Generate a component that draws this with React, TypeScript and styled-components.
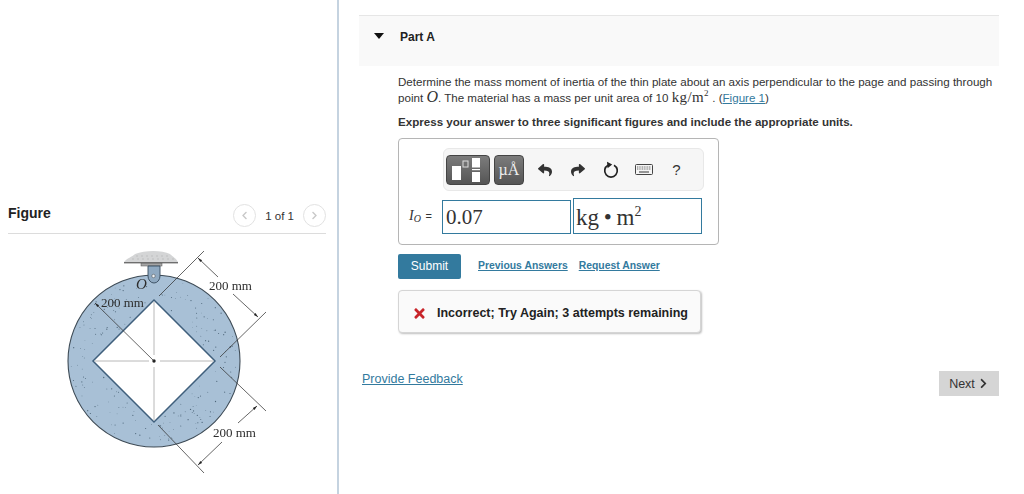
import React from 'react';
import styled, { createGlobalStyle } from 'styled-components';
import { FaReply, FaShare, FaTimes, FaChevronRight, FaChevronLeft } from 'react-icons/fa';

const GlobalStyle = createGlobalStyle`
  html, body {
    margin: 0;
    padding: 0;
    background: #fff;
    color: #1f1f1f;
    font-family: "Liberation Sans", Arial, sans-serif;
  }
`;

// little dots on the plate, same every render
function makeSpeckles() {
  const dots: { x: number; y: number; r: number }[] = [];
  let seed = 17;
  const next = () => {
    seed = (seed * 16807) % 2147483647;
    return seed / 2147483647;
  };
  while (dots.length < 200) {
    const x = 68 + next() * 172;
    const y = 275 + next() * 172;
    const dx = x - 154;
    const dy = y - 361;
    const inCircle = dx * dx + dy * dy < 83 * 83;
    const inDiamond = Math.abs(dx) + Math.abs(dy) < 65;
    if (inCircle && !inDiamond) dots.push({ x, y, r: 0.3 + next() * 0.35 });
  }
  return dots;
}

const speckles = makeSpeckles();

function PlateFigure() {
  return (
    <FigureSvg viewBox="60 240 220 240" width="220" height="240">
      <defs>
        <marker id="tip" markerWidth="7" markerHeight="7" refX="6" refY="2.5" orient="auto-start-reverse">
          <path d="M0 0.8 L6 2.5 L0 4.2 Z" fill="#222" />
        </marker>
      </defs>

      {/* support */}
      <path d="M124 262 C127 258 132 257 135 254 C145 250 162 250 170 254 C173 257 176 258 178 262 Z" fill="#d4d5d6" />
      <path d="M136 256 H168 M132 259 H174" stroke="#b9babb" strokeWidth="0.8" strokeDasharray="2 3" />
      <rect x="124" y="262" width="54" height="1.4" fill="#6e6e6e" />
      <rect x="141" y="263.4" width="21" height="2.6" fill="#a5a5a5" stroke="#555" strokeWidth="0.5" />

      <circle cx="154" cy="361" r="86" fill="#a8c0d6" stroke="#3d4a55" strokeWidth="1.1" />
      {speckles.map((d, i) => (
        <circle key={i} cx={d.x} cy={d.y} r={d.r} fill="#4d6579" />
      ))}
      <path d="M148 266 H160 V276 A6 7 0 0 1 148 276 Z" fill="#8fa9c1" stroke="#364a5b" strokeWidth="0.9" />
      <circle cx="153.5" cy="276" r="1.7" fill="#eef2f5" stroke="#444" strokeWidth="0.5" />

      <path d="M154 300 L215 361 L154 422 L93 361 Z" fill="#fff" stroke="#3f5f7c" strokeWidth="1.5" />

      {/* center lines */}
      <g stroke="#b8b8b8" strokeWidth="1" fill="none">
        <path d="M95 361 H149 M160 361 H213" />
        <path d="M154 302 V355 M154 367 V420" />
      </g>
      <circle cx="154" cy="361" r="1.7" fill="#222" />

      {/* dimension lines */}
      <g stroke="#333" strokeWidth="0.75" fill="none">
        <path d="M159 296 L204 251" />
        <path d="M220 357 L266 312" />
        <path d="M220 367 L266 411" />
        <path d="M158 425 L204 473" />
        <path d="M218 277 L198 258" markerEnd="url(#tip)" />
        <path d="M233 294 L258 317" markerEnd="url(#tip)" />
        <path d="M238 423 L257 406" markerEnd="url(#tip)" />
        <path d="M222 442 L198 465" markerEnd="url(#tip)" />
        <path d="M154 361 L95 303" markerEnd="url(#tip)" />
      </g>

      <FigureLabel x="209" y="290">200 mm</FigureLabel>
      <FigureLabel x="101" y="307">200 mm</FigureLabel>
      <FigureLabel x="213" y="437">200 mm</FigureLabel>
      <PointLabel x="136" y="289">O</PointLabel>
    </FigureSvg>
  );
}

function TemplateIcon() {
  return (
    <svg width="32" height="24" viewBox="0 0 32 24">
      <rect x="0" y="8" width="9" height="14" fill="#fff" />
      <rect x="11" y="3" width="5" height="6" fill="none" stroke="#ddd" strokeWidth="1" />
      <rect x="20" y="0" width="8" height="9.5" fill="#fff" />
      <rect x="20" y="11" width="8" height="1.2" fill="#fff" />
      <rect x="20" y="14" width="8" height="10" fill="#fff" />
    </svg>
  );
}

function RefreshIcon() {
  return (
    <svg width="16" height="18" viewBox="0 0 16 18">
      <path d="M5 4.2 A6.3 6.3 0 1 0 11 4.2" fill="none" stroke="#222" strokeWidth="1.7" />
      <path d="M4 0.8 L9.2 3.6 L4.6 7.2 Z" fill="#222" />
    </svg>
  );
}

function KeyboardIcon() {
  return (
    <svg width="18" height="11" viewBox="0 0 18 11">
      <rect x="0.5" y="0.5" width="17" height="10" rx="1" fill="#f5f5f5" stroke="#444" />
      <path d="M2 3 H16 M2 5 H16" stroke="#666" strokeWidth="1" strokeDasharray="1 0.7" />
      <path d="M4 8 H14" stroke="#555" strokeWidth="1.2" />
    </svg>
  );
}

export default function App() {
  return (
    <Page>
      <GlobalStyle />
      <LeftPanel>
        <FigureHeader>
          <FigureTitle>Figure</FigureTitle>
          <Pager>
            <PagerButton><FaChevronLeft size={9} /></PagerButton>
            <PagerText>1 of 1</PagerText>
            <PagerButton><FaChevronRight size={9} /></PagerButton>
          </Pager>
        </FigureHeader>
        <PlateFigure />
      </LeftPanel>

      <RightPanel>
        <PartHeader>
          <Caret />
          <PartTitle>Part A</PartTitle>
        </PartHeader>

        <PartBody>
          <Question>
            <div>Determine the mass moment of inertia of the thin plate about an axis perpendicular to the page and passing through</div>
            <div>point <MathItalic>O</MathItalic>. The material has a mass per unit area of 10 <MathText>kg/m<sup>2</sup></MathText>&nbsp;. (<TextLink>Figure 1</TextLink>)</div>
          </Question>
          <Instruction>Express your answer to three significant figures and include the appropriate units.</Instruction>

          <AnswerBox>
            <Toolbar>
              <TemplateButton><TemplateIcon /></TemplateButton>
              <UnitButton>µÅ</UnitButton>
              <ToolIcon><FaReply size={14} /></ToolIcon>
              <ToolIcon><FaShare size={14} /></ToolIcon>
              <ToolIcon><RefreshIcon /></ToolIcon>
              <ToolIcon><KeyboardIcon /></ToolIcon>
              <ToolIcon>?</ToolIcon>
            </Toolbar>
            <AnswerRow>
              <AnswerLabel><i>I</i><Sub>O</Sub> <Equals>=</Equals></AnswerLabel>
              <ValueField>0.07</ValueField>
              <UnitField>kg <Dot>•</Dot> m<sup>2</sup></UnitField>
            </AnswerRow>
          </AnswerBox>

          <ActionRow>
            <SubmitButton>Submit</SubmitButton>
            <ActionLink>Previous Answers</ActionLink>
            <ActionLink>Request Answer</ActionLink>
          </ActionRow>

          <Feedback>
            <FaTimes size={15} color="#c8252a" />
            <FeedbackText>Incorrect; Try Again; 3 attempts remaining</FeedbackText>
          </Feedback>
        </PartBody>

        <FooterRow>
          <FeedbackLink>Provide Feedback</FeedbackLink>
          <NextButton>Next <FaChevronRight size={11} /></NextButton>
        </FooterRow>
      </RightPanel>
    </Page>
  );
}

const Page = styled.div`
  display: flex;
  width: 1024px;
  height: 494px;
  overflow: hidden;
`;

const LeftPanel = styled.div`
  box-sizing: border-box;
  width: 339px;
  height: 494px;
  padding: 204px 11px 0 8px;
  border-right: 2px solid #c5d3e0;
`;

const FigureHeader = styled.div`
  display: flex;
  justify-content: space-between;
  height: 29px;
  border-bottom: 1px solid #dcdcdc;
`;

const FigureTitle = styled.div`
  font-size: 14px;
  font-weight: bold;
  line-height: 18px;
  color: #222;
`;

const Pager = styled.div`
  display: flex;
  align-items: flex-start;
  gap: 9px;
`;

const PagerButton = styled.div`
  box-sizing: border-box;
  width: 23px;
  height: 23px;
  border: 1px solid #e2e2e2;
  border-radius: 50%;
  display: flex;
  align-items: center;
  justify-content: center;
  color: #c8c8c8;
`;

const PagerText = styled.span`
  font-size: 11.5px;
  line-height: 25px;
  color: #333;
`;

const FigureSvg = styled.svg`
  display: block;
  margin: 6px 0 0 52px;
  filter: blur(0.45px);
`;

const FigureLabel = styled.text`
  font-family: "Liberation Serif", "Times New Roman", serif;
  font-size: 13px;
  fill: #2d2d2d;
`;

const PointLabel = styled(FigureLabel)`
  font-size: 15px;
  font-style: italic;
`;

const RightPanel = styled.div`
  box-sizing: border-box;
  width: 640px;
  margin-left: 20px;
  padding-top: 15px;
`;

const PartHeader = styled.div`
  box-sizing: border-box;
  height: 51px;
  padding: 14px 0 0 15px;
  display: flex;
  align-items: flex-start;
  background: #f9f9f9;
  border-top: 1px solid #e6e6e6;
`;

const Caret = styled.span`
  width: 0;
  height: 0;
  margin-top: 3px;
  border-left: 5.5px solid transparent;
  border-right: 5.5px solid transparent;
  border-top: 6px solid #111;
`;

const PartTitle = styled.span`
  margin-left: 15px;
  padding-left: 1px;
  font-size: 12px;
  font-weight: bold;
  line-height: 14px;
  color: #222;
`;

const PartBody = styled.div`
  padding: 8px 0 0 39px;
`;

const Question = styled.div`
  font-size: 11.6px;
  line-height: 16px;
  color: #333;
  div {
    height: 16px;
    white-space: nowrap;
  }
  sup {
    font-size: 9px;
    line-height: 0;
  }
`;

const MathItalic = styled.i`
  font-family: "Liberation Serif", serif;
  font-size: 16px;
  line-height: 0;
`;

const MathText = styled.span`
  font-family: "Liberation Serif", serif;
  font-size: 15px;
  line-height: 0;
  letter-spacing: 0.4px;
`;

const TextLink = styled.span`
  color: #337a9e;
  text-decoration: underline;
`;

const Instruction = styled.div`
  margin-top: 8px;
  font-size: 11.6px;
  font-weight: bold;
  line-height: 16px;
  color: #333;
`;

const AnswerBox = styled.div`
  box-sizing: border-box;
  width: 321px;
  height: 107px;
  margin-top: 8px;
  padding: 9px 15px 0 9px;
  border: 1px solid #b5b5b5;
  border-radius: 4px;
`;

const Toolbar = styled.div`
  box-sizing: border-box;
  width: 261px;
  height: 43px;
  margin-left: 35px;
  padding: 0 2px;
  display: flex;
  align-items: center;
  background: #f6f6f6;
  border: 1px solid #e8e8e8;
  border-radius: 6px;
`;

const TemplateButton = styled.div`
  box-sizing: border-box;
  width: 44px;
  height: 30px;
  display: flex;
  align-items: center;
  justify-content: center;
  background: linear-gradient(#7c7c7c, #555);
  border: 1px solid #444;
  border-radius: 4px;
`;

const UnitButton = styled(TemplateButton)`
  width: 30px;
  margin: 0 4px;
  color: #eee;
  font-family: "Liberation Serif", serif;
  font-size: 16px;
`;

const ToolIcon = styled.div`
  width: 33px;
  display: flex;
  justify-content: center;
  color: #333;
  font-size: 15px;
`;

const AnswerRow = styled.div`
  display: flex;
  align-items: flex-end;
  margin-top: 7px;
`;

const AnswerLabel = styled.div`
  box-sizing: border-box;
  width: 34px;
  padding: 0 0 10px 1px;
  font-family: "Liberation Serif", serif;
  font-size: 14px;
  color: #333;
`;

const Sub = styled.span`
  font-style: italic;
  font-size: 10px;
  vertical-align: -2px;
  margin-right: 1px;
`;

const Equals = styled.span`
  font-family: "Liberation Sans", sans-serif;
  font-size: 11px;
`;

const ValueField = styled.div`
  box-sizing: border-box;
  width: 129px;
  height: 34px;
  padding-left: 3px;
  border: 1px solid #337a9e;
  font-family: "Liberation Serif", serif;
  font-size: 21px;
  line-height: 32px;
  color: #333;
`;

const UnitField = styled(ValueField)`
  height: 36px;
  margin-left: 2px;
  padding-left: 2px;
  font-size: 23px;
  line-height: 38px;
  white-space: nowrap;
  word-spacing: -1px;
  sup {
    font-size: 14px;
    line-height: 0;
    vertical-align: 9px;
  }
`;

const Dot = styled.span`
  font-size: 23px;
  line-height: 0;
`;

const ActionRow = styled.div`
  display: flex;
  align-items: flex-start;
  margin-top: 9px;
`;

const SubmitButton = styled.div`
  box-sizing: border-box;
  width: 63px;
  height: 25px;
  background: #337a9e;
  border-radius: 2px;
  color: #fff;
  font-size: 12px;
  line-height: 25px;
  text-align: center;
`;

const ActionLink = styled.span`
  margin-left: 11px;
  font-size: 10.4px;
  font-weight: bold;
  line-height: 24px;
  color: #337a9e;
  text-decoration: underline;
  &:first-of-type {
    margin-left: 17px;
  }
`;

const Feedback = styled.div`
  box-sizing: border-box;
  width: 303px;
  height: 43px;
  margin-top: 11px;
  padding: 3px 0 0 13px;
  display: flex;
  align-items: center;
  gap: 10px;
  background: #fafafa;
  border: 1px solid #d5d5d5;
  border-radius: 4px;
  box-shadow: 1px 1px 2px rgba(0, 0, 0, 0.25);
`;

const FeedbackText = styled.span`
  font-size: 12.5px;
  font-weight: bold;
  color: #222;
`;

const FooterRow = styled.div`
  display: flex;
  justify-content: space-between;
  align-items: flex-start;
  margin: 38px 0 0 3px;
`;

const FeedbackLink = styled.span`
  font-size: 12.5px;
  line-height: 16px;
  color: #337a9e;
  text-decoration: underline;
`;

const NextButton = styled.div`
  box-sizing: border-box;
  width: 60px;
  height: 25px;
  display: flex;
  align-items: center;
  justify-content: center;
  gap: 3px;
  background: #d5d5d5;
  font-size: 12.5px;
  color: #333;
`;
